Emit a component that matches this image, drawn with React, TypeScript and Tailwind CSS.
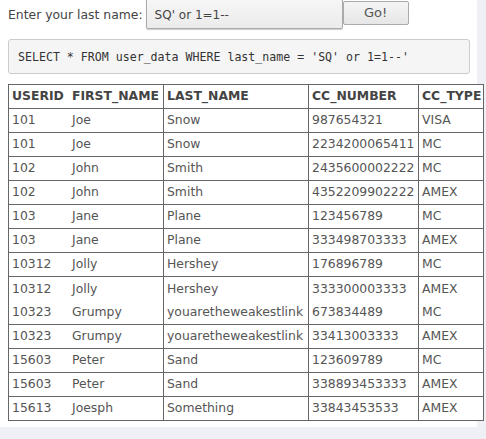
const rows: string[][] = [
  ['101', 'Joe', 'Snow', '987654321', 'VISA'],
  ['101', 'Joe', 'Snow', '2234200065411', 'MC'],
  ['102', 'John', 'Smith', '2435600002222', 'MC'],
  ['102', 'John', 'Smith', '4352209902222', 'AMEX'],
  ['103', 'Jane', 'Plane', '123456789', 'MC'],
  ['103', 'Jane', 'Plane', '333498703333', 'AMEX'],
  ['10312', 'Jolly', 'Hershey', '176896789', 'MC'],
  ['10312', 'Jolly', 'Hershey', '333300003333', 'AMEX'],
  ['10323', 'Grumpy', 'youaretheweakestlink', '673834489', 'MC'],
  ['10323', 'Grumpy', 'youaretheweakestlink', '33413003333', 'AMEX'],
  ['15603', 'Peter', 'Sand', '123609789', 'MC'],
  ['15603', 'Peter', 'Sand', '338893453333', 'AMEX'],
  ['15613', 'Joesph', 'Something', '33843453533', 'AMEX'],
];

const headers = ['USERID', 'FIRST_NAME', 'LAST_NAME', 'CC_NUMBER', 'CC_TYPE'];

export default function App() {
  return (
    <div className="min-h-[439px] w-[486px] overflow-hidden bg-[#eef0f5] font-['DejaVu_Sans',sans-serif] text-[12.4px] text-[#555]">
      <div className="w-[477px] h-[427px] bg-white pl-2">
        <div className="flex items-start">
          <span className="mt-[6px] text-[#444]">Enter your last name:</span>
          <div className="ml-[3px] -mt-[3px] h-[32px] w-[197px] rounded-[2px] border border-[#aaa] bg-gradient-to-b from-[#f7f7f7] to-[#ebebeb] pl-[8px] pt-[8px] text-[12px] text-[#444] shadow-[0_1px_1px_rgba(0,0,0,0.2)]">
            SQ' or 1=1--
          </div>
          <button className="mt-[1px] h-[24px] w-[66px] rounded-[2px] border border-[#aaa] bg-gradient-to-b from-[#f5f5f5] to-[#e6e6e6] text-[13px] text-[#555]">
            Go!
          </button>
        </div>
        <div className="mt-[10px] h-[35px] w-[462px] rounded-[3px] border border-[#ccc] bg-[#f5f5f5] pl-[9px] pt-[9px] font-['DejaVu_Sans_Mono',monospace] text-[11.6px] text-[#333] whitespace-pre">
          SELECT * FROM user_data WHERE last_name = 'SQ' or 1=1--'
        </div>
        <table className="mt-[10px] w-[476px] table-fixed border-separate border-spacing-0 border-l border-t border-[#666] bg-white">
          <colgroup>
            <col className="w-[60px]" />
            <col className="w-[95px]" />
            <col className="w-[145px]" />
            <col className="w-[110px]" />
            <col className="w-[65px]" />
          </colgroup>
          <thead>
            <tr className="h-[24px]">
              {headers.map((h, i) => (
                <th
                  key={h}
                  className={`${i === 0 ? '' : 'border-r'} border-b border-[#666] px-[3px] text-left font-bold text-[#444] whitespace-nowrap`}
                >
                  {h}
                </th>
              ))}
            </tr>
          </thead>
          <tbody>
            {rows.map((r, ri) => (
              <tr key={ri} className="h-[24px]">
                {r.map((c, ci) => (
                  <td
                    key={ci}
                    className={`${ci === 0 ? '' : 'border-r'} ${ri === 7 ? '' : 'border-b'} border-[#666] px-[3px] whitespace-nowrap`}
                  >
                    {c}
                  </td>
                ))}
              </tr>
            ))}
          </tbody>
        </table>
      </div>
    </div>
  );
}
